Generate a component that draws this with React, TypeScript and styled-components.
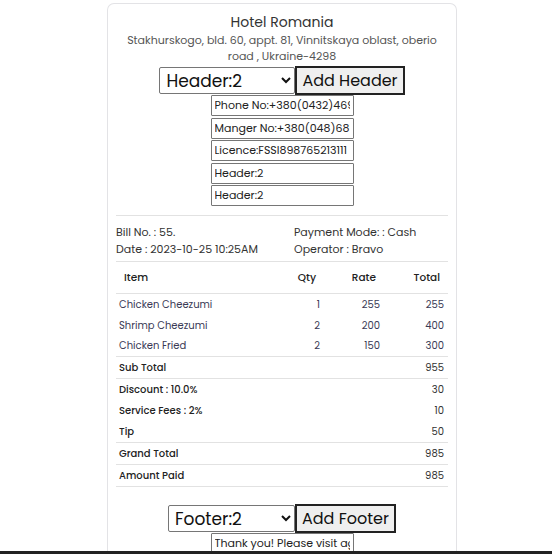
import React from "react";
import styled, { createGlobalStyle } from "styled-components";

const Global = createGlobalStyle`
  html, body { margin: 0; padding: 0; background: #fff; overflow: hidden; }
  body { font-family: "Poppins", "Inter", "Noto Sans", sans-serif; color: #333; }
`;

const Page = styled.div`
  padding: 3px 0 0 107px;
`;

const Card = styled.div`
  width: 332px;
  padding: 8px 8px 20px;
  border: 1px solid #e3e3e6;
  border-bottom: none;
  border-radius: 7px 7px 0 0;
  display: flex;
  flex-direction: column;
  align-items: center;
`;

const Title = styled.div`
  font-size: 14px;
  line-height: 20px;
  color: #333;
`;

const Address = styled.div`
  font-size: 11px;
  line-height: 16px;
  color: #555;
  text-align: center;
`;

const Controls = styled.div`
  display: flex;
  align-items: center;
  margin-top: 2px;
`;

const Select = styled.select<{ $w: number }>`
  width: ${(p) => p.$w}px;
  height: 27px;
  font-family: inherit;
  font-size: 17px;
  color: #111;
  border: 1px solid #767676;
  border-radius: 2px;
  background: #fff;
  padding: 0 2px;
`;

const Button = styled.button`
  height: 29px;
  font-family: inherit;
  font-size: 16px;
  color: #111;
  background: #efefef;
  border: 2px solid #222;
  padding: 0 5px;
`;

const Inputs = styled.div`
  display: flex;
  flex-direction: column;
  gap: 1.5px;
`;

const Field = styled.input`
  width: 143px;
  height: 21px;
  box-sizing: border-box;
  font-family: inherit;
  font-size: 11px;
  color: #222;
  border: 1px solid #767676;
  padding: 0 3px;
  border-radius: 1px;
`;

const Divider = styled.div<{ $mt?: number }>`
  align-self: stretch;
  height: 1px;
  background: #e2e2e2;
  margin-top: ${(p) => p.$mt ?? 0}px;
`;

const Meta = styled.div`
  align-self: stretch;
  display: grid;
  grid-template-columns: 178px 1fr;
  font-size: 11px;
  line-height: 17px;
  color: #333;
  padding: 8px 0 3px;
`;

const Row = styled.div<{ $head?: boolean; $line?: boolean }>`
  align-self: stretch;
  display: grid;
  grid-template-columns: 1fr 54px 60px 64px;
  font-size: ${(p) => (p.$head ? 10.5 : 10)}px;
  font-weight: ${(p) => (p.$head ? 500 : 400)};
  color: ${(p) => (p.$head ? "#222" : "#3a3a55")};
  height: ${(p) => (p.$head ? 32 : 21)}px;
  align-items: center;
  border-bottom: ${(p) => (p.$line ? "1px solid #e2e2e2" : "none")};
  padding: ${(p) => (p.$head ? "0 8px 0 8px" : "0 4px 0 3px")};
  box-sizing: border-box;
  & > span { text-align: right; }
  & > span:first-child { text-align: left; }
`;

const Totals = styled.div<{ $line?: boolean }>`
  align-self: stretch;
  display: flex;
  justify-content: space-between;
  align-items: center;
  height: 21px;
  font-size: 10px;
  color: #222;
  padding: 0 4px 0 3px;
  border-bottom: ${(p) => (p.$line ? "1px solid #e2e2e2" : "none")};
`;

const Label = styled.span`
  font-weight: 500;
`;

const Value = styled.span`
  font-weight: 400;
  color: #333;
`;

const Gap = styled.div<{ $h: number }>`
  height: ${(p) => p.$h}px;
`;

const BottomBar = styled.div`
  position: fixed;
  left: 0;
  right: 0;
  bottom: 0;
  height: 3px;
  background: #222;
`;

const items = [
  ["Chicken Cheezumi", "1", "255", "255"],
  ["Shrimp Cheezumi", "2", "200", "400"],
  ["Chicken Fried", "2", "150", "300"],
];

const totals: [string, string, boolean][] = [
  ["Sub Total", "955", true],
  ["Discount : 10.0%", "30", false],
  ["Service Fees : 2%", "10", false],
  ["Tip", "50", true],
  ["Grand Total", "985", true],
  ["Amount Paid", "985", true],
];

export default function App() {
  return (
    <>
      <Global />
      <Page>
        <Card>
          <Title>Hotel Romania</Title>
          <Address>
            Stakhurskogo, bld. 60, appt. 81, Vinnitskaya oblast, oberio road , Ukraine-4298
          </Address>
          <Controls>
            <Select $w={136} defaultValue="Header:2">
              <option>Header:2</option>
            </Select>
            <Button>Add Header</Button>
          </Controls>
          <Inputs>
            <Field defaultValue="Phone No:+380(0432)4695235" />
            <Field defaultValue="Manger No:+380(048)6856678" />
            <Field defaultValue="Licence:FSSI898765213111" />
            <Field defaultValue="Header:2" />
            <Field defaultValue="Header:2" />
          </Inputs>
          <Divider $mt={9} />
          <Meta>
            <span>Bill No. : 55.</span>
            <span>Payment Mode: : Cash</span>
            <span>Date : 2023-10-25 10:25AM</span>
            <span>Operator : Bravo</span>
          </Meta>
          <Divider />
          <Row $head $line>
            <span>Item</span>
            <span>Qty</span>
            <span>Rate</span>
            <span>Total</span>
          </Row>
          {items.map((it, i) => (
            <Row key={i} $line={i === items.length - 1}>
              {it.map((c, j) => (
                <span key={j}>{c}</span>
              ))}
            </Row>
          ))}
          {totals.map(([l, v, line], i) => (
            <Totals key={i} $line={line}>
              <Label>{l}</Label>
              <Value>{v}</Value>
            </Totals>
          ))}
          <Gap $h={15} />
          <Controls>
            <Select $w={127} defaultValue="Footer:2">
              <option>Footer:2</option>
            </Select>
            <Button>Add Footer</Button>
          </Controls>
          <Inputs>
            <Field defaultValue="Thank you! Please visit again" />
          </Inputs>
        </Card>
      </Page>
      <BottomBar />
    </>
  );
}
